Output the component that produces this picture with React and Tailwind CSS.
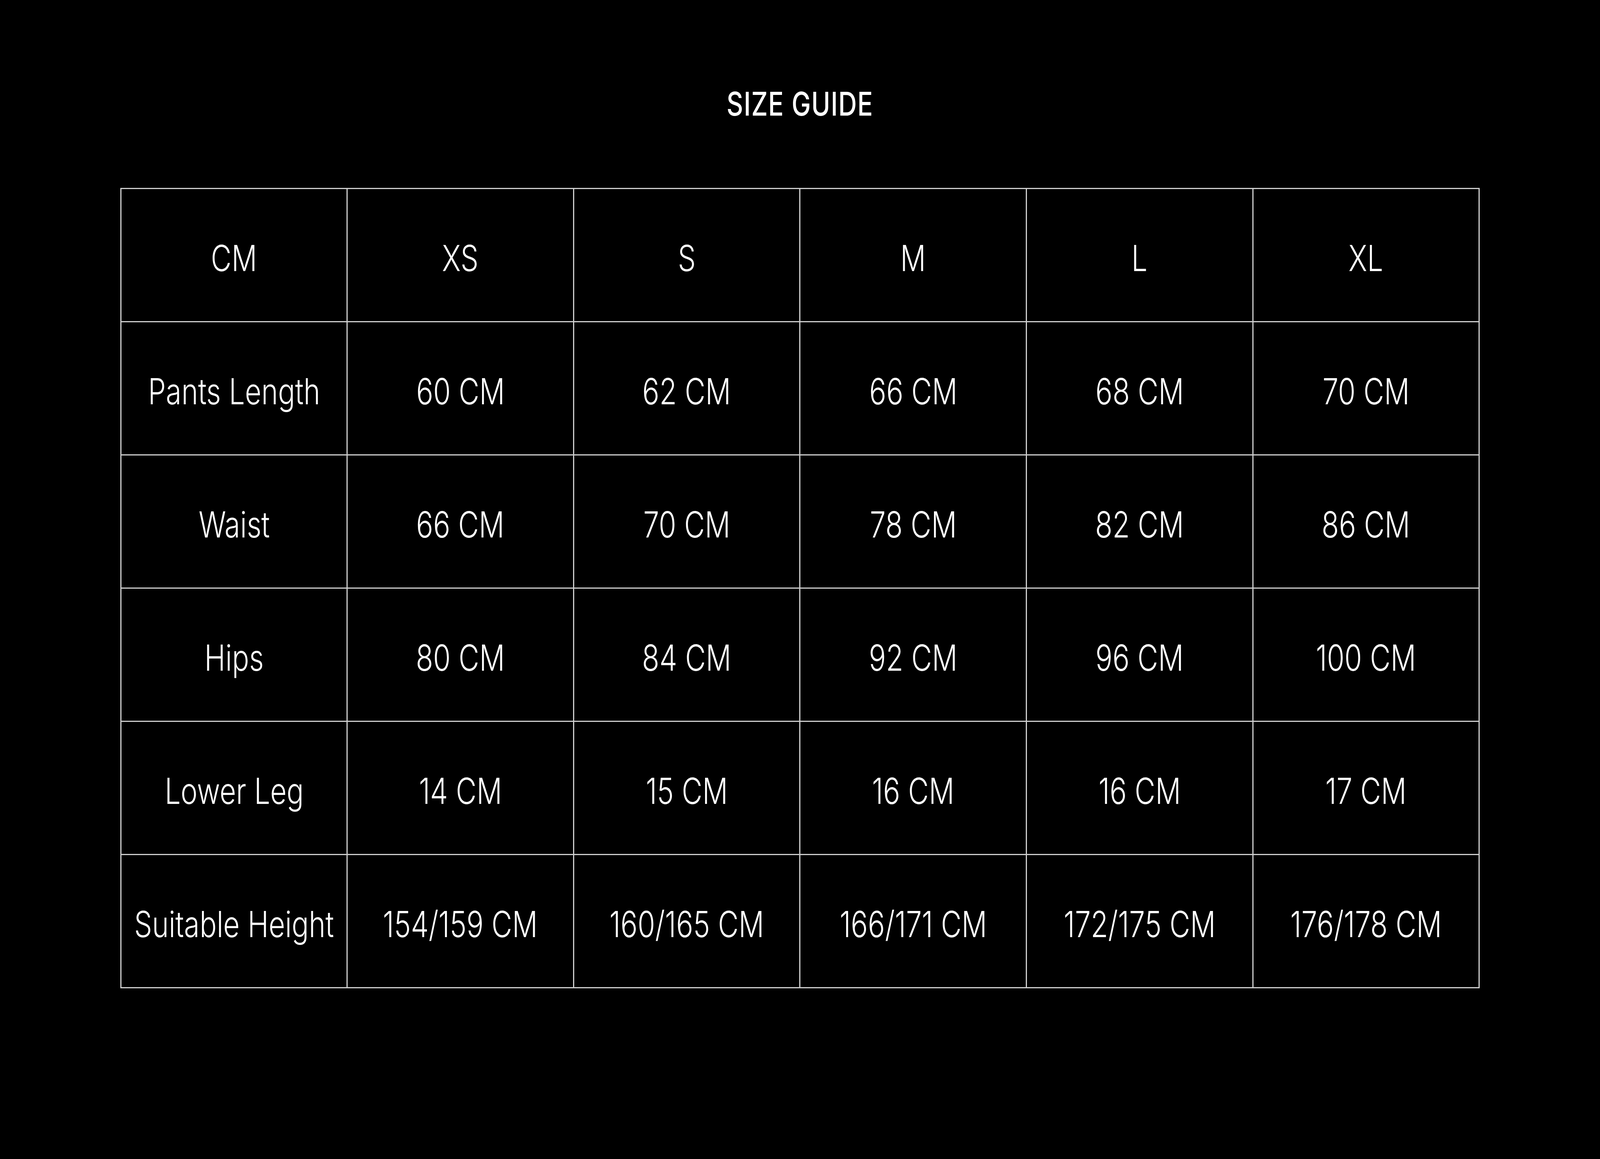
const sizes = ["XS", "S", "M", "L", "XL"];

const rows = [
  { label: "Pants Length", values: ["60 CM", "62 CM", "66 CM", "68 CM", "70 CM"] },
  { label: "Waist", values: ["66 CM", "70 CM", "78 CM", "82 CM", "86 CM"] },
  { label: "Hips", values: ["80 CM", "84 CM", "92 CM", "96 CM", "100 CM"] },
  { label: "Lower Leg", values: ["14 CM", "15 CM", "16 CM", "16 CM", "17 CM"] },
  {
    label: "Suitable Height",
    values: ["154/159 CM", "160/165 CM", "166/171 CM", "172/175 CM", "176/178 CM"],
  },
];

// design width of the mockup; the browser may be narrower, so the
// horizontal stretch of the (extended-looking) type follows the real width
const DESIGN_W = 6959;

function Cell({ children }) {
  return (
    <div className="flex h-[338px] items-center justify-center bg-black">
      <span className="inline-block scale-x-[calc(var(--k)*1.34)] pt-[15px] text-[92px] leading-none font-light whitespace-nowrap text-white">
        {children}
      </span>
    </div>
  );
}

export default function App() {
  const k = typeof window !== "undefined" ? window.innerWidth / DESIGN_W : 1;

  const cells = ["CM", ...sizes];
  rows.forEach((r) => cells.push(r.label, ...r.values));

  return (
    <div
      className="flex min-h-screen w-full flex-col items-center bg-black font-['Inter','Liberation_Sans',sans-serif]"
      style={{ "--k": k }}
    >
      <h1 className="mt-[224px] inline-block scale-x-[calc(var(--k)*1.33)] text-[84px] leading-none font-medium tracking-[0.02em] whitespace-nowrap text-white">
        SIZE GUIDE
      </h1>

      <div className="mt-[173px] grid w-[84.97%] grid-cols-6 gap-[3px] bg-[#cfcfcf] p-[3px]">
        {cells.map((c, i) => (
          <Cell key={i}>{c}</Cell>
        ))}
      </div>
    </div>
  );
}
